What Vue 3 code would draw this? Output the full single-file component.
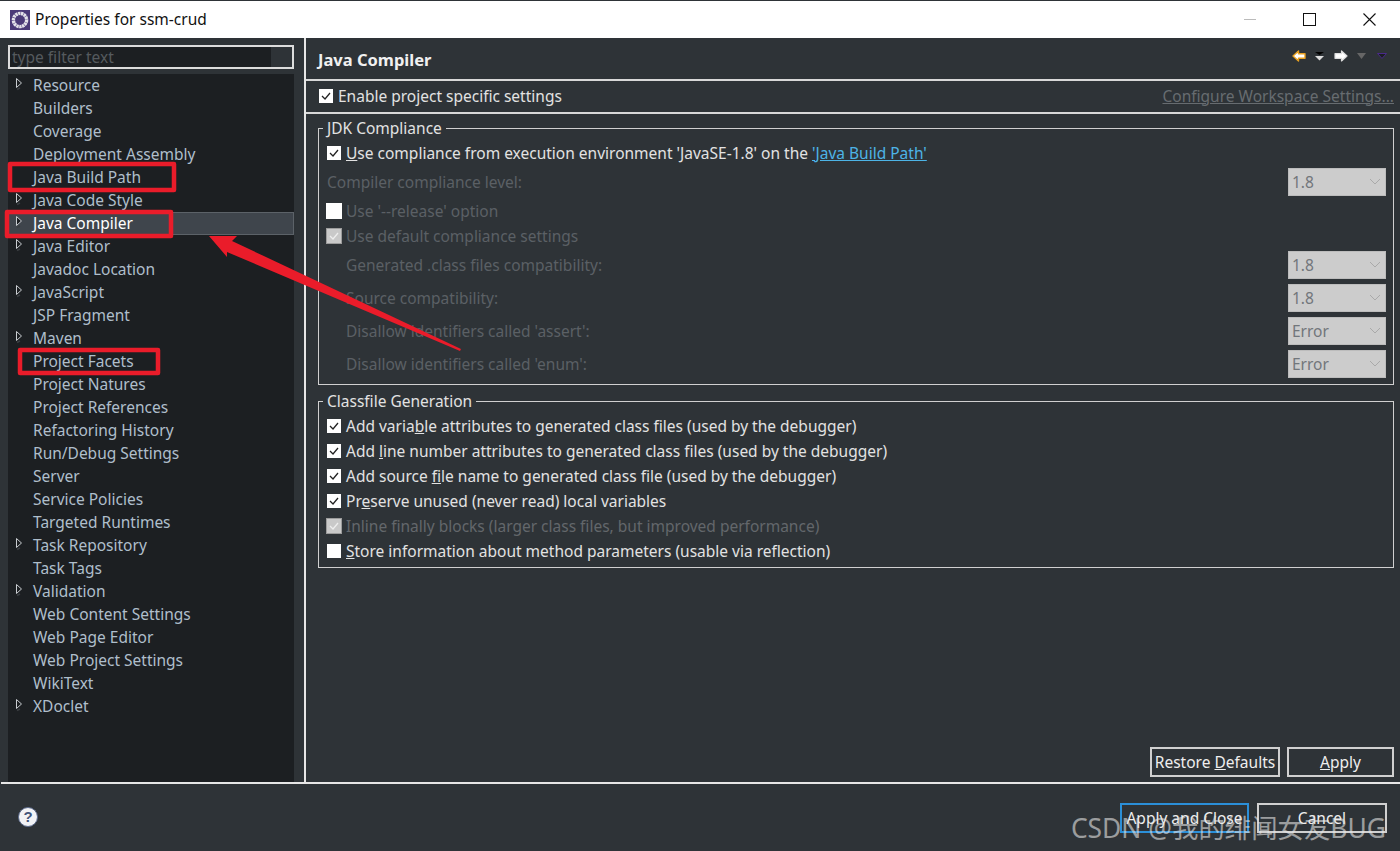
<script setup>
const tree = [
  ['Resource', 1], ['Builders', 0], ['Coverage', 0], ['Deployment Assembly', 0], ['Java Build Path', 0],
  ['Java Code Style', 1], ['Java Compiler', 1, true], ['Java Editor', 1], ['Javadoc Location', 0], ['JavaScript', 1],
  ['JSP Fragment', 0], ['Maven', 1], ['Project Facets', 0], ['Project Natures', 0], ['Project References', 0],
  ['Refactoring History', 0], ['Run/Debug Settings', 0], ['Server', 0], ['Service Policies', 0], ['Targeted Runtimes', 0],
  ['Task Repository', 1], ['Task Tags', 0], ['Validation', 1], ['Web Content Settings', 0], ['Web Page Editor', 0],
  ['Web Project Settings', 0], ['WikiText', 0], ['XDoclet', 1]
]
const combos = [
  { label: 'Generated .class files compatibility:', value: '1.8', cls: 'mt4' },
  { label: 'Source compatibility:', value: '1.8', cls: 'mt8' },
  { label: "Disallow identifiers called 'assert':", value: 'Error', cls: 'mt8' },
  { label: "Disallow identifiers called 'enum':", value: 'Error', cls: 'mt8' }
]
</script>

<template>
  <div class="window">
    <header class="titlebar">
      <svg class="appicon" width="20" height="20" viewBox="0 0 20 20">
        <rect width="20" height="20" fill="#4b3a78" />
        <circle cx="10" cy="10" r="6.6" fill="none" stroke="#e4e2ea" stroke-width="3.4" stroke-dasharray="2.4 0.5" />
      </svg>
      <span class="title">Properties for ssm-crud</span>
      <div class="winbtns">
        <span class="minimize"></span>
        <span class="maximize"></span>
        <svg width="13" height="13" viewBox="0 0 13 13"><path d="M.5 .5l12 12M12.500 .5l-12 12" stroke="#111" stroke-width="1.1" fill="none" /></svg>
      </div>
    </header>

    <div class="body">
      <aside class="side">
        <div class="filter"><span class="filter-inner">type filter text</span></div>
        <ul class="tree">
          <li v-for="item in tree" :key="item[0]" class="node" :class="{ selected: item[2] }">
            <svg v-if="item[1]" class="twisty" width="9" height="14" viewBox="0 0 9 14">
              <path d="M1.5 1.5l5 4.5-5 4.5z" fill="#1c1f22" stroke="#c9cdd1" stroke-width="1" />
              <path d="M2 12.5l3-1.5" stroke="#3a3e42" stroke-width="1.5" />
            </svg>
            <span>{{ item[0] }}</span>
          </li>
        </ul>
      </aside>

      <main class="main">
        <div class="headbar">
          <h1>Java Compiler</h1>
          <div class="navicons">
            <svg width="14" height="12" viewBox="0 0 14 12"><path d="M1 6L6.500 1v2.700H13v4.600H6.500V11z" fill="#fff" stroke="#e8a020" stroke-width="1.4" stroke-linejoin="round" /></svg>
            <svg class="g9" width="9" height="9" viewBox="0 0 9 9"><path d="M0 0h9L4.500 3z" fill="#000" /><path d="M0 4h9L4.500 8.500z" fill="#ddd" /></svg>
            <svg class="g10" width="14" height="12" viewBox="0 0 14 12"><path d="M13 6L7.500 1v2.700H1v4.600h6.500V11z" fill="#fff" stroke="#ddd" stroke-width="1.2" stroke-linejoin="round" /></svg>
            <svg class="g9" width="9" height="6" viewBox="0 0 9 6"><path d="M0 0h9L4.500 6z" fill="#666" /></svg>
            <svg class="g11" width="10" height="6" viewBox="0 0 10 6"><path d="M.5 .5h9L5 5.500z" fill="#1c1f22" stroke="#4a2a8a" /></svg>
          </div>
        </div>

        <div class="enable">
          <label class="check"><span class="box on"><svg viewBox="0 0 14 14"><path d="M3 7l3 3 5-6" /></svg></span><span>Enable pro<u>j</u>ect specific settings</span></label>
          <a class="configure">Configure Workspace Settings...</a>
        </div>

        <section class="group jdk">
          <div class="legend">JDK Compliance</div>
          <div class="row"><label class="check"><span class="box on"><svg viewBox="0 0 14 14"><path d="M3 7l3 3 5-6" /></svg></span><span><u>U</u>se compliance from execution environment 'JavaSE-1.8' on the <a class="link">'Java Build Path'</a></span></label></div>
          <div class="row mt4 spread dim"><span>Compiler compliance level:</span><span class="combo">1.8<svg width="12" height="7" viewBox="0 0 12 7"><path d="M1 1l5 5 5-5" /></svg></span></div>
          <div class="row mt4"><label class="check dim"><span class="box off"></span>Use '--release' option</label></div>
          <div class="row"><label class="check dim"><span class="box dis"><svg viewBox="0 0 14 14"><path d="M3 7l3 3 5-6" /></svg></span>Use default compliance settings</label></div>
          <div v-for="c in combos" :key="c.label" class="row spread dim indent" :class="c.cls">
            <span>{{ c.label }}</span>
            <span class="combo">{{ c.value }}<svg width="12" height="7" viewBox="0 0 12 7"><path d="M1 1l5 5 5-5" /></svg></span>
          </div>
        </section>

        <section class="group cls">
          <div class="legend">Classfile Generation</div>
          <div class="row"><label class="check"><span class="box on"><svg viewBox="0 0 14 14"><path d="M3 7l3 3 5-6" /></svg></span><span>Add varia<u>b</u>le attributes to generated class files (used by the debugger)</span></label></div>
          <div class="row"><label class="check"><span class="box on"><svg viewBox="0 0 14 14"><path d="M3 7l3 3 5-6" /></svg></span><span>Add <u>l</u>ine number attributes to generated class files (used by the debugger)</span></label></div>
          <div class="row"><label class="check"><span class="box on"><svg viewBox="0 0 14 14"><path d="M3 7l3 3 5-6" /></svg></span><span>Add source <u>f</u>ile name to generated class file (used by the debugger)</span></label></div>
          <div class="row"><label class="check"><span class="box on"><svg viewBox="0 0 14 14"><path d="M3 7l3 3 5-6" /></svg></span><span>Pr<u>e</u>serve unused (never read) local variables</span></label></div>
          <div class="row"><label class="check dim2"><span class="box dis"><svg viewBox="0 0 14 14"><path d="M3 7l3 3 5-6" /></svg></span>Inline finally blocks (larger class files, but improved performance)</label></div>
          <div class="row"><label class="check"><span class="box off"></span><span><u>S</u>tore information about method parameters (usable via reflection)</span></label></div>
        </section>

        <div class="actions">
          <button class="btn restore">Restore <u>D</u>efaults</button>
          <button class="btn apply"><u>A</u>pply</button>
        </div>
      </main>
    </div>

    <footer class="footer">
      <svg class="help" width="20" height="20" viewBox="0 0 20 20">
        <circle cx="10" cy="10" r="9.500" fill="#f2f3f6" stroke="#5b6a8c" />
        <text x="10" y="15" text-anchor="middle" class="helpq">?</text>
      </svg>
      <div class="footbtns">
        <button class="btn primary">Apply and Close</button>
        <button class="btn cancel">Cancel</button>
      </div>
    </footer>

    <svg class="marks" width="1400" height="851" viewBox="0 0 1400 851">
      <g fill="none" stroke="#ea1c2a" stroke-width="4.500" stroke-linejoin="round">
        <rect x="10" y="164" width="164" height="26" />
        <rect x="7" y="212" width="164" height="24" />
        <rect x="20" y="350" width="138" height="23" />
      </g>
      <path d="M209 236L237 236L232 241L461 349L460 351L227 252L227 257Z" fill="#ea1c2a" />
    </svg>
    <div class="watermark">CSDN @我的绯闻女友BUG</div>
  </div>
</template>

<style>
html, body { margin: 0; background: #2e3337; }
</style>

<style scoped>
.window {
  position: relative;
  width: 1400px;
  height: 851px;
  display: flex;
  flex-direction: column;
  overflow: hidden;
  background: #2e3337;
  color: #e2e2e2;
  font-family: "Noto Sans", "Noto Sans CJK SC", sans-serif;
  font-size: 15.5px;
  line-height: 20px;
}
.titlebar {
  height: 37px;
  flex: none;
  margin-top: 1px;
  background: #fff;
  display: flex;
  align-items: center;
  padding-left: 10px;
  color: #111;
}
.appicon { flex: none; }
.title { margin-left: 5px; padding-bottom: 2px; }
.winbtns { margin-left: auto; display: flex; align-items: center; padding-right: 24px; }
.minimize { width: 12px; height: 1px; background: #bbb; margin-right: 47px; }
.maximize { width: 11px; height: 11px; border: 1px solid #111; margin-right: 47px; }
.body { flex: none; height: 744px; display: flex; }
.side {
  flex: none;
  box-sizing: border-box;
  width: 306px;
  padding: 7px 10px 0 8px;
  border-right: 2px solid #e6e6e6;
  display: flex;
  flex-direction: column;
}
.filter {
  height: 24px;
  box-sizing: border-box;
  border: 2px solid #dcdcdc;
  flex: none;
  background: #2e3337;
}
.filter-inner {
  display: block;
  width: 261px;
  height: 20px;
  background: #1c1f22;
  color: #555a5e;
  line-height: 20px;
  padding-left: 2px;
  box-sizing: border-box;
  white-space: nowrap;
}
.tree {
  list-style: none;
  margin: 5px 0 0;
  padding: 0;
  flex: 1;
  background: #1c1f22;
  width: 286px;
}
.node {
  position: relative;
  height: 23px;
  box-sizing: border-box;
  padding-left: 25px;
  line-height: 23px;
  color: #afbecb;
  white-space: nowrap;
}
.node.selected {
  background: #3f454c;
  outline: 1px solid #5c6268;
  outline-offset: -1px;
  color: #fff;
}
.twisty { position: absolute; left: 7px; top: 3px; }
.main {
  flex: 1;
  min-width: 0;
  box-sizing: border-box;
  padding: 0 6px 0 12px;
  display: flex;
  flex-direction: column;
}
.headbar {
  height: 43px;
  flex: none;
  margin: 0 -6px 0 -12px;
  padding: 2px 6px 0 12px;
  border-bottom: 2px solid #d8d8d8;
  box-sizing: border-box;
  display: flex;
  align-items: center;
  justify-content: space-between;
}
h1 { margin: 0; font-size: 16.500px; font-weight: 700; color: #f0f0f0; }
.navicons { display: flex; align-items: center; margin: -7px 7px 0 0; }
.g9 { margin-left: 9px; }
.g10 { margin-left: 10px; }
.g11 { margin-left: 11px; }
.enable {
  height: 33px;
  flex: none;
  margin: 0 -6px 0 -12px;
  padding: 0 6px 2px 13px;
  border-bottom: 2px solid #d8d8d8;
  box-sizing: border-box;
  display: flex;
  align-items: center;
  justify-content: space-between;
}
.configure { color: #676c70; text-decoration: underline; }
.check { display: flex; align-items: center; white-space: nowrap; }
.box {
  width: 14px;
  height: 14px;
  flex: none;
  margin-right: 5px;
  display: block;
  box-sizing: border-box;
}
.box svg { display: block; width: 14px; height: 14px; fill: none; stroke: #222; stroke-width: 1.300; }
.box.on, .box.off { background: #fff; }
.box.dis { width: 16px; height: 16px; margin-left: -1px; margin-right: 4px; background: #c9c9c9; border: 1px solid #9c9c9c; }
.box.dis svg { stroke: #eee; }
.dim .box.off { width: 16px; height: 16px; margin-left: -1px; margin-right: 4px; }
.group {
  position: relative;
  border: 1px solid #d0d0d0;
  box-sizing: border-box;
  padding: 0 7px 0 8px;
  flex: none;
}
.jdk { margin-top: 14px; height: 257px; padding-top: 11px; }
.cls { margin-top: 16px; height: 167px; padding-top: 11px; }
.legend {
  position: absolute;
  top: -11px;
  left: 4px;
  padding: 0 4px;
  background: #2e3337;
  height: 20px;
  color: #e2e2e2;
}
.row { display: flex; align-items: center; height: 25px; }
.mt4 { margin-top: 4px; }
.mt8 { margin-top: 8px; }
.spread { justify-content: space-between; }
.indent { padding-left: 19px; }
.dim { color: #5b6065; }
.dim2 { color: #63676b; }
.link { color: #4db4e6; text-decoration: underline; }
.combo {
  width: 98px;
  height: 28px;
  flex: none;
  box-sizing: border-box;
  background: #cccccc;
  border: 1px solid #bcbcbc;
  color: #72767b;
  display: flex;
  align-items: center;
  justify-content: space-between;
  padding: 0 4px 0 3px;
}
.combo svg { fill: none; stroke: #a9a9a9; stroke-width: 1; }
.actions {
  margin-top: auto;
  margin-bottom: 5px;
  display: flex;
  justify-content: flex-end;
  gap: 7px;
  flex: none;
}
.btn {
  font: inherit;
  color: #eee;
  background: transparent;
  border: 2px solid #d0d0d0;
  box-sizing: border-box;
  height: 30px;
  padding: 0;
  text-align: center;
  white-space: nowrap;
}
.restore { width: 130px; }
.apply { width: 107px; }
.footer {
  flex: 1;
  box-sizing: border-box;
  border-top: 2px solid #e6e6e6;
  margin-left: 1px;
  display: flex;
  align-items: center;
  padding: 0 13px 0 17px;
  color: #eee;
}
.help { margin-top: -2px; flex: none; }
.helpq { font-family: "Liberation Sans", sans-serif; font-size: 15px; font-weight: 700; fill: #44557a; }
.footbtns { margin-left: auto; display: flex; gap: 8px; }
.primary { width: 129px; border-color: #2b8fd8; }
.cancel { width: 130px; }
.marks { position: absolute; left: 0; top: 0; pointer-events: none; }
.watermark {
  position: absolute;
  right: 14px;
  top: 811px;
  font-size: 26.400px;
  line-height: 34px;
  color: rgba(230, 230, 230, 0.6);
  white-space: nowrap;
  pointer-events: none;
}
</style>
